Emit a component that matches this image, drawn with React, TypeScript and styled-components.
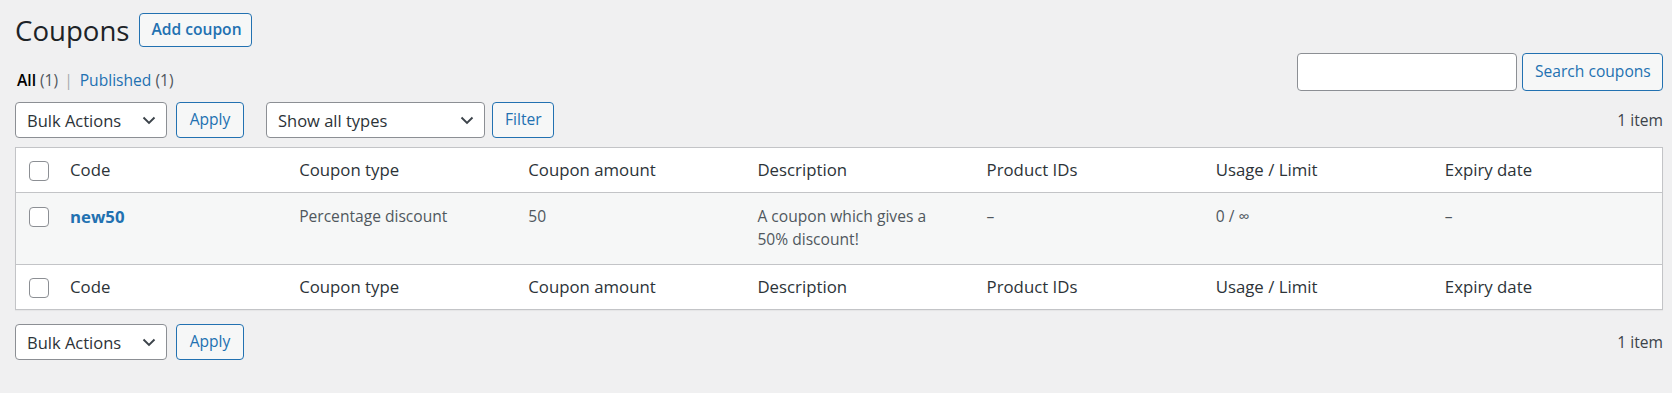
import React from "react";
import styled, { createGlobalStyle } from "styled-components";

const GlobalStyle = createGlobalStyle`
  html, body {
    margin: 0;
    padding: 0;
    background: #f0f0f1;
  }
  body {
    font-family: "Open Sans", "Noto Sans", "Liberation Sans", sans-serif;
    color: #3c434a;
  }
  * { box-sizing: border-box; }
`;

const Wrap = styled.div`
  padding: 13px 9px 30px 15px;
  width: 1672px;
`;

const TitleRow = styled.div`
  display: flex;
  align-items: center;
  gap: 10px;
  height: 34px;
`;

const Title = styled.h1`
  margin: 0;
  font-size: 27.6px;
  font-weight: 400;
  line-height: 34px;
  color: #1d2327;
`;

const Button = styled.button<{ $bold?: boolean; $w?: number }>`
  font-family: inherit;
  height: ${(p) => (p.$bold ? 34 : 36)}px;
  padding: 0 ${(p) => (p.$bold ? 11 : 12)}px;
  border: 1px solid #2271b1;
  border-radius: 4px;
  background: #f6f7f7;
  color: #2271b1;
  font-size: 15.6px;
  font-weight: ${(p) => (p.$bold ? 600 : 400)};
  line-height: 1;
  cursor: pointer;
  white-space: nowrap;
  ${(p) => (p.$w ? `width: ${p.$w}px;` : "")}
`;

const SubRow = styled.div`
  display: flex;
  justify-content: space-between;
  align-items: flex-end;
  margin-top: 6px;
  height: 38px;
`;

const SubSubSub = styled.ul`
  list-style: none;
  margin: 0 0 -1px 2px;
  padding: 0;
  display: flex;
  font-size: 15.6px;
  line-height: 24px;
  color: #646970;
`;

const SubItem = styled.li`
  white-space: pre;
`;

const SubLink = styled.a<{ $current?: boolean }>`
  color: ${(p) => (p.$current ? "#000" : "#2271b1")};
  font-weight: ${(p) => (p.$current ? 600 : 400)};
  text-decoration: none;
  margin-right: 4px;
`;

const Count = styled.span`
  color: #50575e;
`;

const Sep = styled.span`
  color: #a7aaad;
  margin: 0 7px 0 6px;
`;

const SearchBox = styled.div`
  display: flex;
  gap: 5px;
`;

const SearchInput = styled.input`
  width: 220px;
  height: 38px;
  border: 1px solid #8c8f94;
  border-radius: 4px;
  background: #fff;
  font-family: inherit;
  font-size: 16.8px;
  padding: 0 10px;
`;

const SearchButton = styled(Button)`
  height: 38px;
  width: 141px;
`;

const TableNav = styled.div<{ $top?: boolean }>`
  display: flex;
  align-items: center;
  height: 36px;
  margin-top: ${(p) => (p.$top ? 11 : 14)}px;
  margin-bottom: ${(p) => (p.$top ? 9 : 0)}px;
`;

const Actions = styled.div<{ $gap?: number }>`
  display: flex;
  align-items: center;
  gap: ${(p) => p.$gap ?? 9}px;
  margin-right: ${(p) => (p.$gap ? 0 : 22)}px;
`;

const SelectBox = styled.div<{ $w: number }>`
  width: ${(p) => p.$w}px;
  height: 36px;
  border: 1px solid #8c8f94;
  border-radius: 4px;
  background: #fff;
  display: flex;
  align-items: center;
  justify-content: space-between;
  padding: 0 10px 0 11px;
  font-size: 16.5px;
  color: #2c3338;
`;

const Chevron = styled.svg`
  width: 14px;
  height: 9px;
  display: block;
`;

const ItemCount = styled.div`
  margin-left: auto;
  font-size: 15.6px;
  color: #3c434a;
  line-height: 36px;
`;

const Table = styled.div`
  border: 1px solid #c3c4c7;
  background: #fff;
  box-shadow: 0 1px 1px rgba(0, 0, 0, 0.04);
`;

const Row = styled.div<{ $body?: boolean; $line?: boolean }>`
  display: grid;
  grid-template-columns: 42px repeat(7, minmax(0, 1fr));
  height: ${(p) => (p.$body ? 71 : 44) + (p.$line ? 1 : 0)}px;
  background: ${(p) => (p.$body ? "#f6f7f7" : "#fff")};
  ${(p) => (p.$line ? "border-bottom: 1px solid #c3c4c7;" : "")}
`;

const CheckCell = styled.div<{ $body?: boolean }>`
  padding: ${(p) => (p.$body ? 14 : 13)}px 0 0 13px;
`;

const CheckBox = styled.span`
  display: block;
  width: 20px;
  height: 20px;
  border: 1px solid #8c8f94;
  border-radius: 4px;
  background: #fff;
`;

const HeadCell = styled.div`
  padding: 10px 12px;
  font-size: 16.8px;
  line-height: 23.5px;
  color: #2c3338;
  white-space: nowrap;
`;

const Cell = styled.div`
  padding: 12px 12px;
  font-size: 15.6px;
  line-height: 23.4px;
  color: #50575e;
`;

const Description = styled.p`
  margin: 0;
  max-width: 180px;
`;

const CodeLink = styled.a`
  color: #2271b1;
  font-weight: 700;
  font-size: 16.8px;
  text-decoration: none;
`;

const columns = [
  "Code",
  "Coupon type",
  "Coupon amount",
  "Description",
  "Product IDs",
  "Usage / Limit",
  "Expiry date",
];

const ChevronIcon = () => (
  <Chevron viewBox="0 0 14 9">
    <polyline
      points="1.5,1.5 7,7 12.5,1.5"
      fill="none"
      stroke="#3c434a"
      strokeWidth="1.9"
    />
  </Chevron>
);

const HeaderRow = ({ line }: { line?: boolean }) => (
  <Row $line={line}>
    <CheckCell>
      <CheckBox />
    </CheckCell>
    {columns.map((c) => (
      <HeadCell key={c}>{c}</HeadCell>
    ))}
  </Row>
);

const BulkNav = ({ top }: { top?: boolean }) => (
  <TableNav $top={top}>
    <Actions>
      <SelectBox $w={152}>
        Bulk Actions
        <ChevronIcon />
      </SelectBox>
      <Button $w={68}>Apply</Button>
    </Actions>
    {top && (
      <Actions $gap={7}>
        <SelectBox $w={219}>
          Show all types
          <ChevronIcon />
        </SelectBox>
        <Button $w={62}>Filter</Button>
      </Actions>
    )}
    <ItemCount>1 item</ItemCount>
  </TableNav>
);

export default function App() {
  return (
    <>
      <GlobalStyle />
      <Wrap>
        <TitleRow>
          <Title>Coupons</Title>
          <Button $bold $w={113}>
            Add coupon
          </Button>
        </TitleRow>
        <SubRow>
          <SubSubSub>
            <SubItem>
              <SubLink $current>All</SubLink>
              <Count>(1)</Count>
              <Sep>|</Sep>
            </SubItem>
            <SubItem>
              <SubLink>Published</SubLink>
              <Count>(1)</Count>
            </SubItem>
          </SubSubSub>
          <SearchBox>
            <SearchInput type="search" />
            <SearchButton>Search coupons</SearchButton>
          </SearchBox>
        </SubRow>
        <BulkNav top />
        <Table>
          <HeaderRow line />
          <Row $body $line>
            <CheckCell $body>
              <CheckBox />
            </CheckCell>
            <Cell>
              <CodeLink>new50</CodeLink>
            </Cell>
            <Cell>Percentage discount</Cell>
            <Cell>50</Cell>
            <Cell>
              <Description>A coupon which gives a 50% discount!</Description>
            </Cell>
            <Cell>–</Cell>
            <Cell>0 / ∞</Cell>
            <Cell>–</Cell>
          </Row>
          <HeaderRow />
        </Table>
        <BulkNav />
      </Wrap>
    </>
  );
}
